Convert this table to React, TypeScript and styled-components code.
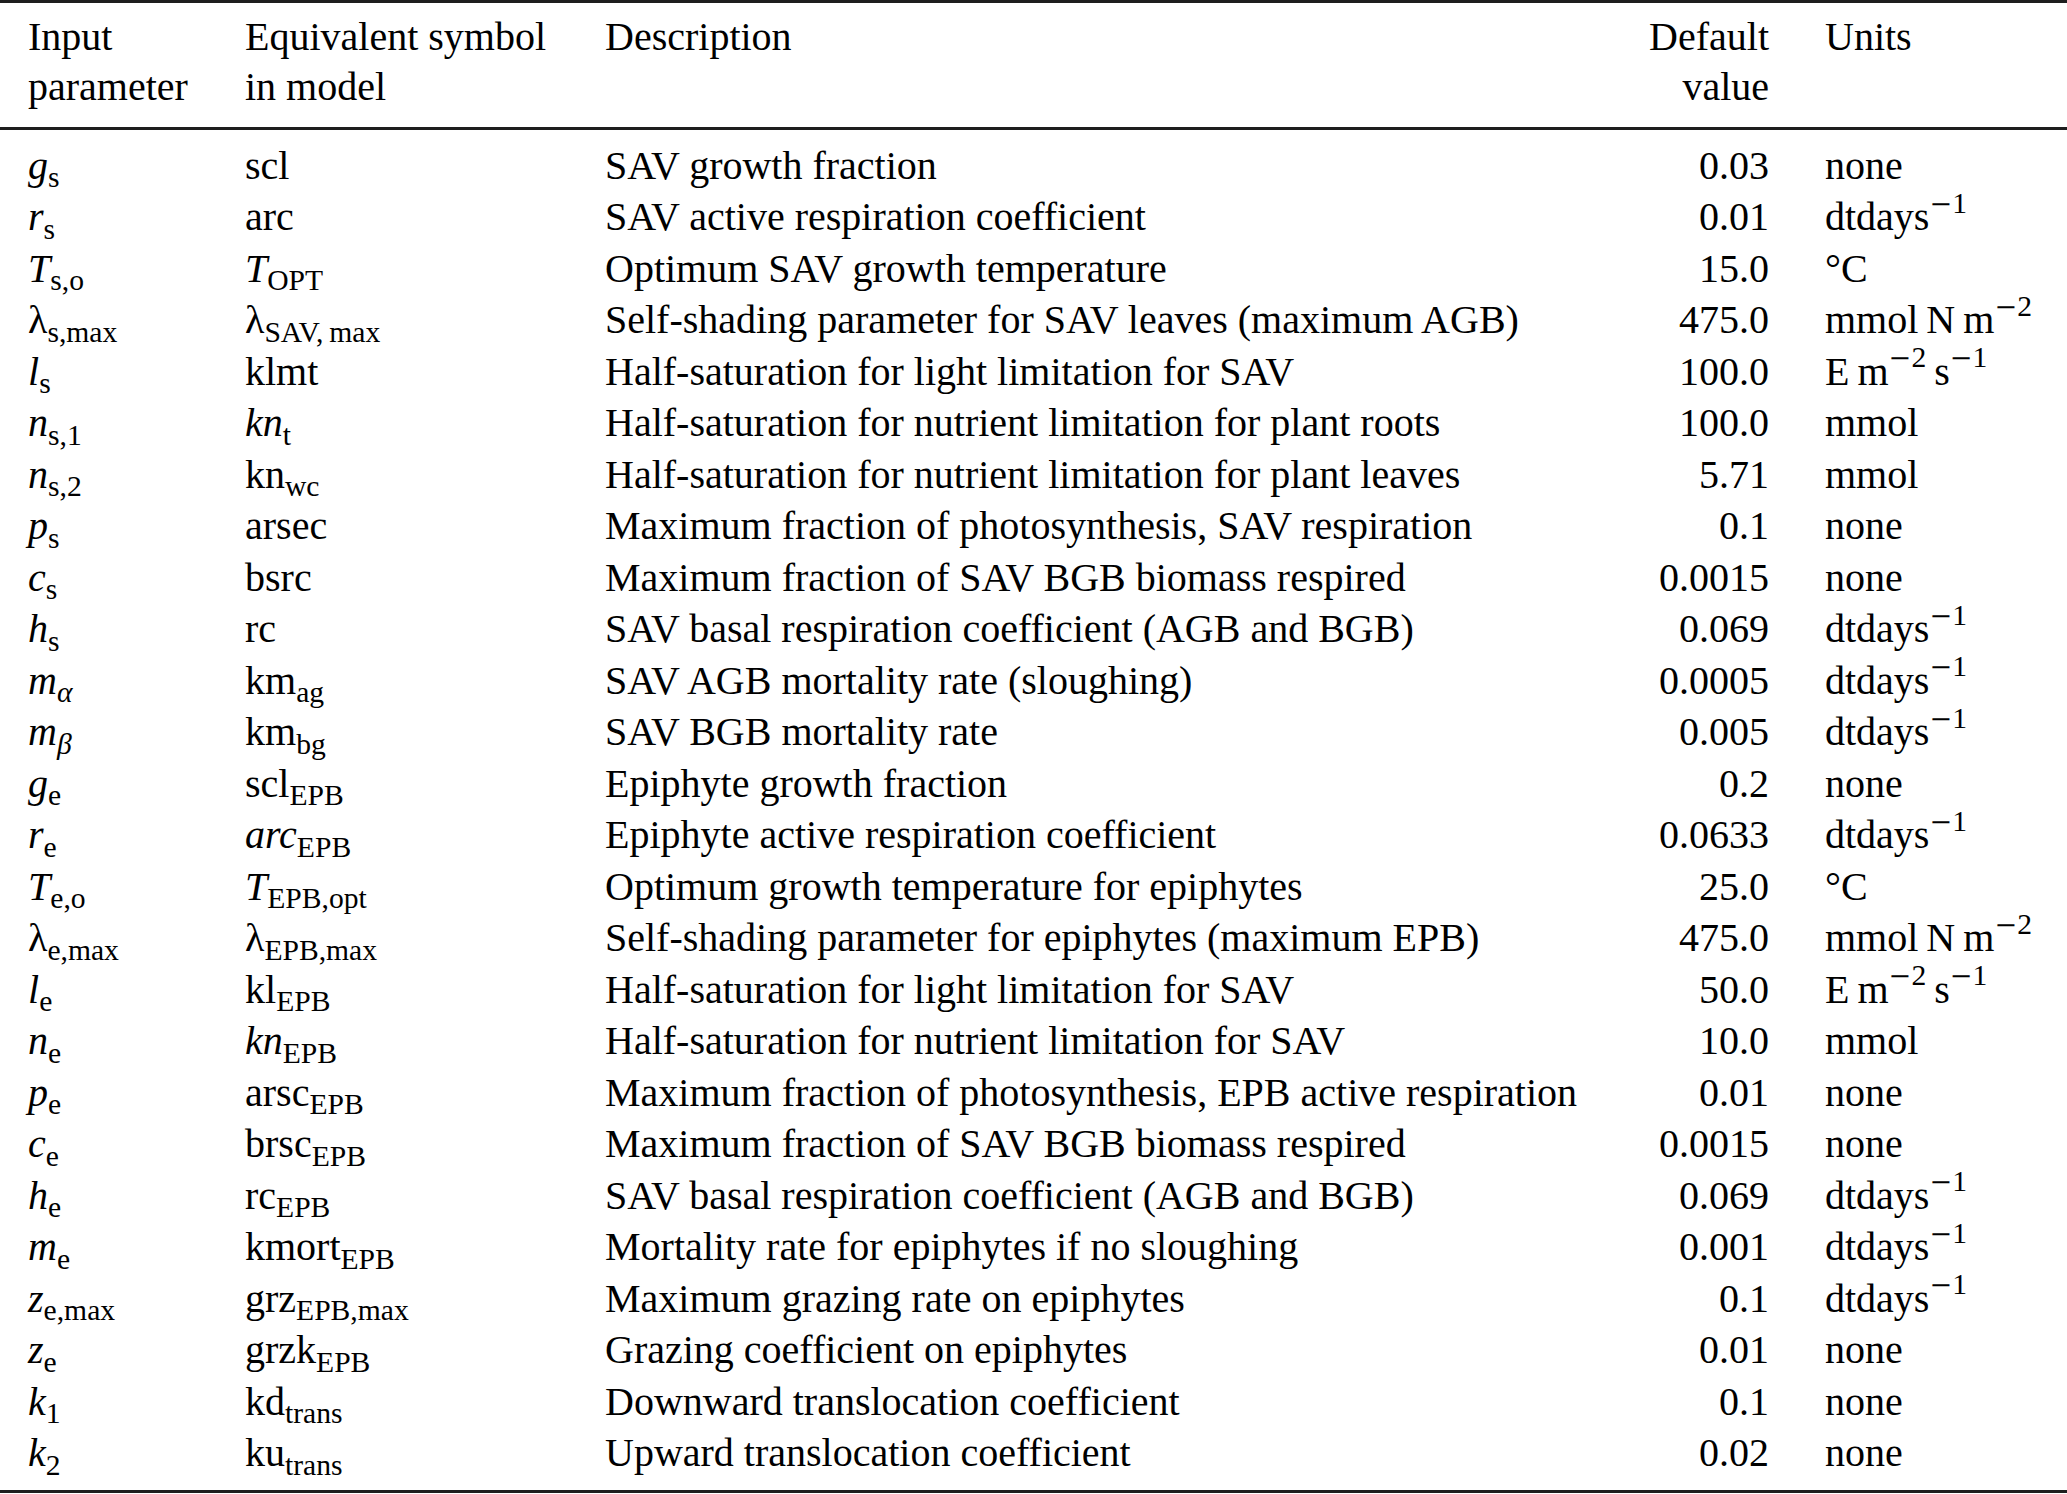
import React from "react"
import styled, { createGlobalStyle } from "styled-components"

const GlobalStyle = createGlobalStyle`
  body {
    margin: 0;
    background: #ffffff;
    color: #000000;
    font-family: "Liberation Serif", "Times New Roman", serif;
  }
`

const COLUMNS = "217px 360px 1000px 164px 1fr"

const Styled = {
  Table: styled.div`
    width: 2067px;
    border-top: 3px solid #1e1e1e;
    border-bottom: 3px solid #1e1e1e;
    font-size: 40px;
  `,
  HeaderRow: styled.div`
    display: grid;
    grid-template-columns: ${COLUMNS};
    padding: 8.5px 0 15.5px 28px;
    line-height: 50px;
    border-bottom: 3px solid #1e1e1e;
  `,
  Body: styled.div`
    padding: 9.75px 0 11.25px;
  `,
  Row: styled.div`
    display: grid;
    grid-template-columns: ${COLUMNS};
    padding-left: 28px;
    height: 51.5px;
    line-height: 51.5px;
  `,
  Cell: styled.div<{ align?: "left" | "right"; inset?: boolean }>`
    white-space: nowrap;
    text-align: ${({ align = "left" }) => align};
    padding-left: ${({ inset = false }) => (inset ? "56px" : "0")};
  `,
  I: styled.i`
    font-style: italic;
  `,
  Sub: styled.span<{ italic?: boolean }>`
    position: relative;
    top: 0.28em;
    font-size: 0.74em;
    line-height: 0;
    font-style: ${({ italic = false }) => (italic ? "italic" : "normal")};
  `,
  Sup: styled.span`
    position: relative;
    top: -0.6em;
    font-size: 0.74em;
    line-height: 0;
  `,
  // Liberation Serif draws U+2212 as a short dash, DejaVu has the wide one
  Minus: styled.span`
    font-family: "DejaVu Serif", serif;
    font-size: 0.92em;
  `,
}

const { I, Sub, Sup, Minus } = Styled

const inverse = (n: string) => (
  <Sup>
    <Minus>−</Minus>
    {n}
  </Sup>
)

const perDay = <>dtdays{inverse("1")}</>
const perArea = <>mmol{"\u2009"}N{"\u2009"}m{inverse("2")}</>
const flux = <>E{"\u2009"}m{inverse("2")}{"\u2009"}s{inverse("1")}</>

type Param = [React.ReactNode, React.ReactNode, string, string, React.ReactNode]

const params: Param[] = [
  [<><I>g</I><Sub>s</Sub></>, "scl", "SAV growth fraction", "0.03", "none"],
  [<><I>r</I><Sub>s</Sub></>, "arc", "SAV active respiration coefficient", "0.01", perDay],
  [<><I>T</I><Sub>s,o</Sub></>, <><I>T</I><Sub>OPT</Sub></>, "Optimum SAV growth temperature", "15.0", "°C"],
  [<>λ<Sub>s,max</Sub></>, <>λ<Sub>SAV,{"\u2009"}max</Sub></>, "Self-shading parameter for SAV leaves (maximum AGB)", "475.0", perArea],
  [<><I>l</I><Sub>s</Sub></>, "klmt", "Half-saturation for light limitation for SAV", "100.0", flux],
  [<><I>n</I><Sub>s,1</Sub></>, <><I>kn</I><Sub>t</Sub></>, "Half-saturation for nutrient limitation for plant roots", "100.0", "mmol"],
  [<><I>n</I><Sub>s,2</Sub></>, <>kn<Sub>wc</Sub></>, "Half-saturation for nutrient limitation for plant leaves", "5.71", "mmol"],
  [<><I>p</I><Sub>s</Sub></>, "arsec", "Maximum fraction of photosynthesis, SAV respiration", "0.1", "none"],
  [<><I>c</I><Sub>s</Sub></>, "bsrc", "Maximum fraction of SAV BGB biomass respired", "0.0015", "none"],
  [<><I>h</I><Sub>s</Sub></>, "rc", "SAV basal respiration coefficient (AGB and BGB)", "0.069", perDay],
  [<><I>m</I><Sub italic>α</Sub></>, <>km<Sub>ag</Sub></>, "SAV AGB mortality rate (sloughing)", "0.0005", perDay],
  [<><I>m</I><Sub italic>β</Sub></>, <>km<Sub>bg</Sub></>, "SAV BGB mortality rate", "0.005", perDay],
  [<><I>g</I><Sub>e</Sub></>, <>scl<Sub>EPB</Sub></>, "Epiphyte growth fraction", "0.2", "none"],
  [<><I>r</I><Sub>e</Sub></>, <><I>arc</I><Sub>EPB</Sub></>, "Epiphyte active respiration coefficient", "0.0633", perDay],
  [<><I>T</I><Sub>e,o</Sub></>, <><I>T</I><Sub>EPB,opt</Sub></>, "Optimum growth temperature for epiphytes", "25.0", "°C"],
  [<>λ<Sub>e,max</Sub></>, <>λ<Sub>EPB,max</Sub></>, "Self-shading parameter for epiphytes (maximum EPB)", "475.0", perArea],
  [<><I>l</I><Sub>e</Sub></>, <>kl<Sub>EPB</Sub></>, "Half-saturation for light limitation for SAV", "50.0", flux],
  [<><I>n</I><Sub>e</Sub></>, <><I>kn</I><Sub>EPB</Sub></>, "Half-saturation for nutrient limitation for SAV", "10.0", "mmol"],
  [<><I>p</I><Sub>e</Sub></>, <>arsc<Sub>EPB</Sub></>, "Maximum fraction of photosynthesis, EPB active respiration", "0.01", "none"],
  [<><I>c</I><Sub>e</Sub></>, <>brsc<Sub>EPB</Sub></>, "Maximum fraction of SAV BGB biomass respired", "0.0015", "none"],
  [<><I>h</I><Sub>e</Sub></>, <>rc<Sub>EPB</Sub></>, "SAV basal respiration coefficient (AGB and BGB)", "0.069", perDay],
  [<><I>m</I><Sub>e</Sub></>, <>kmort<Sub>EPB</Sub></>, "Mortality rate for epiphytes if no sloughing", "0.001", perDay],
  [<><I>z</I><Sub>e,max</Sub></>, <>grz<Sub>EPB,max</Sub></>, "Maximum grazing rate on epiphytes", "0.1", perDay],
  [<><I>z</I><Sub>e</Sub></>, <>grzk<Sub>EPB</Sub></>, "Grazing coefficient on epiphytes", "0.01", "none"],
  [<><I>k</I><Sub>1</Sub></>, <>kd<Sub>trans</Sub></>, "Downward translocation coefficient", "0.1", "none"],
  [<><I>k</I><Sub>2</Sub></>, <>ku<Sub>trans</Sub></>, "Upward translocation coefficient", "0.02", "none"],
]

export default function App() {
  return (
    <>
      <GlobalStyle />
      <Styled.Table>
        <Styled.HeaderRow>
          <Styled.Cell>
            Input
            <br />
            parameter
          </Styled.Cell>
          <Styled.Cell>
            Equivalent symbol
            <br />
            in model
          </Styled.Cell>
          <Styled.Cell>Description</Styled.Cell>
          <Styled.Cell align="right">
            Default
            <br />
            value
          </Styled.Cell>
          <Styled.Cell inset>Units</Styled.Cell>
        </Styled.HeaderRow>
        <Styled.Body>
          {params.map(([symbol, model, description, value, units], i) => (
            <Styled.Row key={i}>
              <Styled.Cell>{symbol}</Styled.Cell>
              <Styled.Cell>{model}</Styled.Cell>
              <Styled.Cell>{description}</Styled.Cell>
              <Styled.Cell align="right">{value}</Styled.Cell>
              <Styled.Cell inset>{units}</Styled.Cell>
            </Styled.Row>
          ))}
        </Styled.Body>
      </Styled.Table>
    </>
  )
}
